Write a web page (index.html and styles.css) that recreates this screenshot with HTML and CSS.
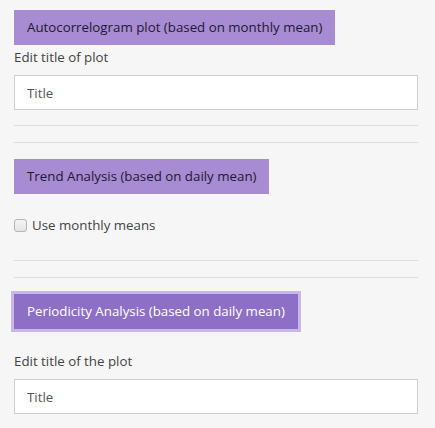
FILE: index.html
```html
<!DOCTYPE html>
<html>
<head>
<meta charset="utf-8">
<link rel="stylesheet" href="styles.css">
</head>
<body>
<div class="panel">
  <section class="block first">
    <button class="btn">Autocorrelogram plot (based on monthly mean)</button>
    <label class="field-label">Edit title of plot</label>
    <input class="field" type="text" value="Title">
  </section>
  <hr class="sep sep-a">
  <hr class="sep sep-b">
  <section class="block">
    <button class="btn">Trend Analysis (based on daily mean)</button>
    <label class="check-row"><input class="check" type="checkbox"><span>Use monthly means</span></label>
  </section>
  <hr class="sep sep-c">
  <hr class="sep sep-b">
  <section class="block">
    <button class="btn btn-active">Periodicity Analysis (based on daily mean)</button>
    <label class="field-label second">Edit title of the plot</label>
    <input class="field" type="text" value="Title">
  </section>
</div>
</body>
</html>
```
FILE: styles.css
```css
html, body {
  margin: 0;
  padding: 0;
  background: #f6f6f6;
}
body {
  font-family: "Open Sans", "Noto Sans", sans-serif;
  font-size: 13.3px;
  color: #444;
}
.panel {
  width: 404px;
  padding: 10px 17px 0 14px;
}
.block {
  display: flex;
  flex-direction: column;
  align-items: flex-start;
}
.btn {
  font-family: inherit;
  font-size: 13.3px;
  line-height: 19px;
  height: 35px;
  padding: 0 13px;
  border: 0;
  background: #a78bd3;
  color: #1f1a2e;
  border-radius: 0;
  cursor: pointer;
}
.btn-active {
  background: #8e6fc6;
  color: #fff;
  box-shadow: 0 0 0 3px #c9b8e4;
}
.field-label {
  display: block;
  line-height: 20px;
  margin: 2px 0 8px;
  color: #444;
}
.field-label.second {
  margin: 22px 0 8px;
}
.field {
  box-sizing: border-box;
  width: 404px;
  height: 35px;
  border: 1px solid #cfcfcf;
  background: #fff;
  padding: 0 12px;
  font-family: inherit;
  font-size: 13.3px;
  color: #555;
  outline: none;
}
.sep {
  border: 0;
  border-top: 1px solid #dedede;
  margin: 0;
  width: 404px;
}
.sep-a { margin-top: 15px; }
.sep-b { margin-top: 16px; margin-bottom: 16px; }
.sep-c { margin-top: 25px; }
.check-row {
  display: flex;
  align-items: center;
  gap: 5px;
  line-height: 20px;
  margin-top: 21px;
  color: #444;
}
.check {
  appearance: none;
  -webkit-appearance: none;
  margin: 0;
  width: 13px;
  height: 13px;
  border: 1px solid #b5b5b5;
  border-radius: 3px;
  background: linear-gradient(#f4f4f4, #e4e4e4);
}
```
